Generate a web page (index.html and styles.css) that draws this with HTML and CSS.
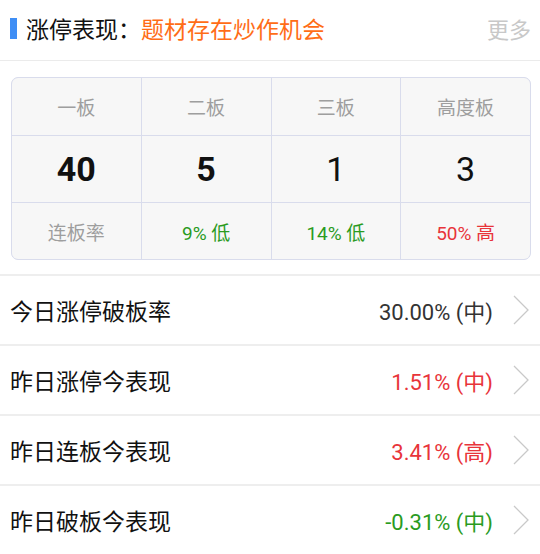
FILE: index.html
```html
<!DOCTYPE html>
<html lang="zh-CN">
	<head>
		<meta charset="UTF-8" />
		<meta name="viewport" content="width=device-width, initial-scale=1.0" />
		<title>涨停表现</title>
		<link rel="stylesheet" href="styles.css">
	</head>
	<body>
		<div class="header">
			<span class="bar"></span>
			<span class="title">涨停表现：</span>
			<span class="theme">题材存在炒作机会</span>
			<span class="more">更多</span>
		</div>
		<div class="board">
			<div class="cell head">一板</div>
			<div class="cell head">二板</div>
			<div class="cell head">三板</div>
			<div class="cell head">高度板</div>
			<div class="cell num bold">40</div>
			<div class="cell num bold">5</div>
			<div class="cell num">1</div>
			<div class="cell num">3</div>
			<div class="cell head">连板率</div>
			<div class="cell rate green">9% 低</div>
			<div class="cell rate green">14% 低</div>
			<div class="cell rate red">50% 高</div>
		</div>
		<div class="list">
			<div class="row">
				<span class="label">今日涨停破板率</span>
				<span class="value">30.00% (中)</span>
				<svg class="arrow" width="16" height="30" viewBox="0 0 16 30"><polyline points="1,1 15,15 1,29" fill="none" stroke="#c9c9c9" stroke-width="1.3"/></svg>
			</div>
			<div class="row">
				<span class="label">昨日涨停今表现</span>
				<span class="value red">1.51% (中)</span>
				<svg class="arrow" width="16" height="30" viewBox="0 0 16 30"><polyline points="1,1 15,15 1,29" fill="none" stroke="#c9c9c9" stroke-width="1.3"/></svg>
			</div>
			<div class="row">
				<span class="label">昨日连板今表现</span>
				<span class="value red">3.41% (高)</span>
				<svg class="arrow" width="16" height="30" viewBox="0 0 16 30"><polyline points="1,1 15,15 1,29" fill="none" stroke="#c9c9c9" stroke-width="1.3"/></svg>
			</div>
			<div class="row">
				<span class="label">昨日破板今表现</span>
				<span class="value green">-0.31% (中)</span>
				<svg class="arrow" width="16" height="30" viewBox="0 0 16 30"><polyline points="1,1 15,15 1,29" fill="none" stroke="#c9c9c9" stroke-width="1.3"/></svg>
			</div>
		</div>
	</body>
</html>
```
FILE: styles.css
```css
body {
	margin: 0;
	background: #fff;
	font-family: Roboto, "Noto Sans CJK SC", sans-serif;
	color: #111;
}
.header {
	display: flex;
	align-items: center;
	height: 56px;
	padding: 0 9px 4px 10px;
	border-bottom: 1px solid #ebebeb;
	font-size: 23px;
}
.bar {
	width: 7px;
	height: 21px;
	background: #3f8ef5;
	margin-right: 9px;
}
.title {
	color: #111;
}
.theme {
	color: #ff6d17;
}
.more {
	margin-left: auto;
	color: #c8c8c8;
	font-size: 22px;
}
.red {
	color: #e8343a !important;
}
.green {
	color: #2a9b1e !important;
}
.board {
	display: grid;
	grid-template-columns: repeat(4, 1fr);
	grid-template-rows: 57px 66px 56px;
	gap: 1px;
	margin: 16px 9px 0 11px;
	border: 1px solid #d9dcec;
	border-radius: 7px;
	overflow: hidden;
	background: #d9dcec;
}
.cell {
	display: flex;
	align-items: center;
	justify-content: center;
	background: #f7f7f7;
}
.head {
	font-size: 19px;
	color: #9e9e9e;
}
.num {
	font-size: 34px;
	color: #111;
}
.bold {
	font-weight: bold;
}
.rate {
	font-size: 19px;
}
.list {
	margin-top: 14px;
}
.row {
	display: flex;
	align-items: center;
	height: 68px;
	padding: 0 11px 0 10px;
	border-top: 2px solid #eeeeee;
}
.label {
	font-size: 23px;
	color: #111;
}
.value {
	margin-left: auto;
	font-size: 22px;
	color: #333;
}
.arrow {
	margin-left: 20px;
}
```
